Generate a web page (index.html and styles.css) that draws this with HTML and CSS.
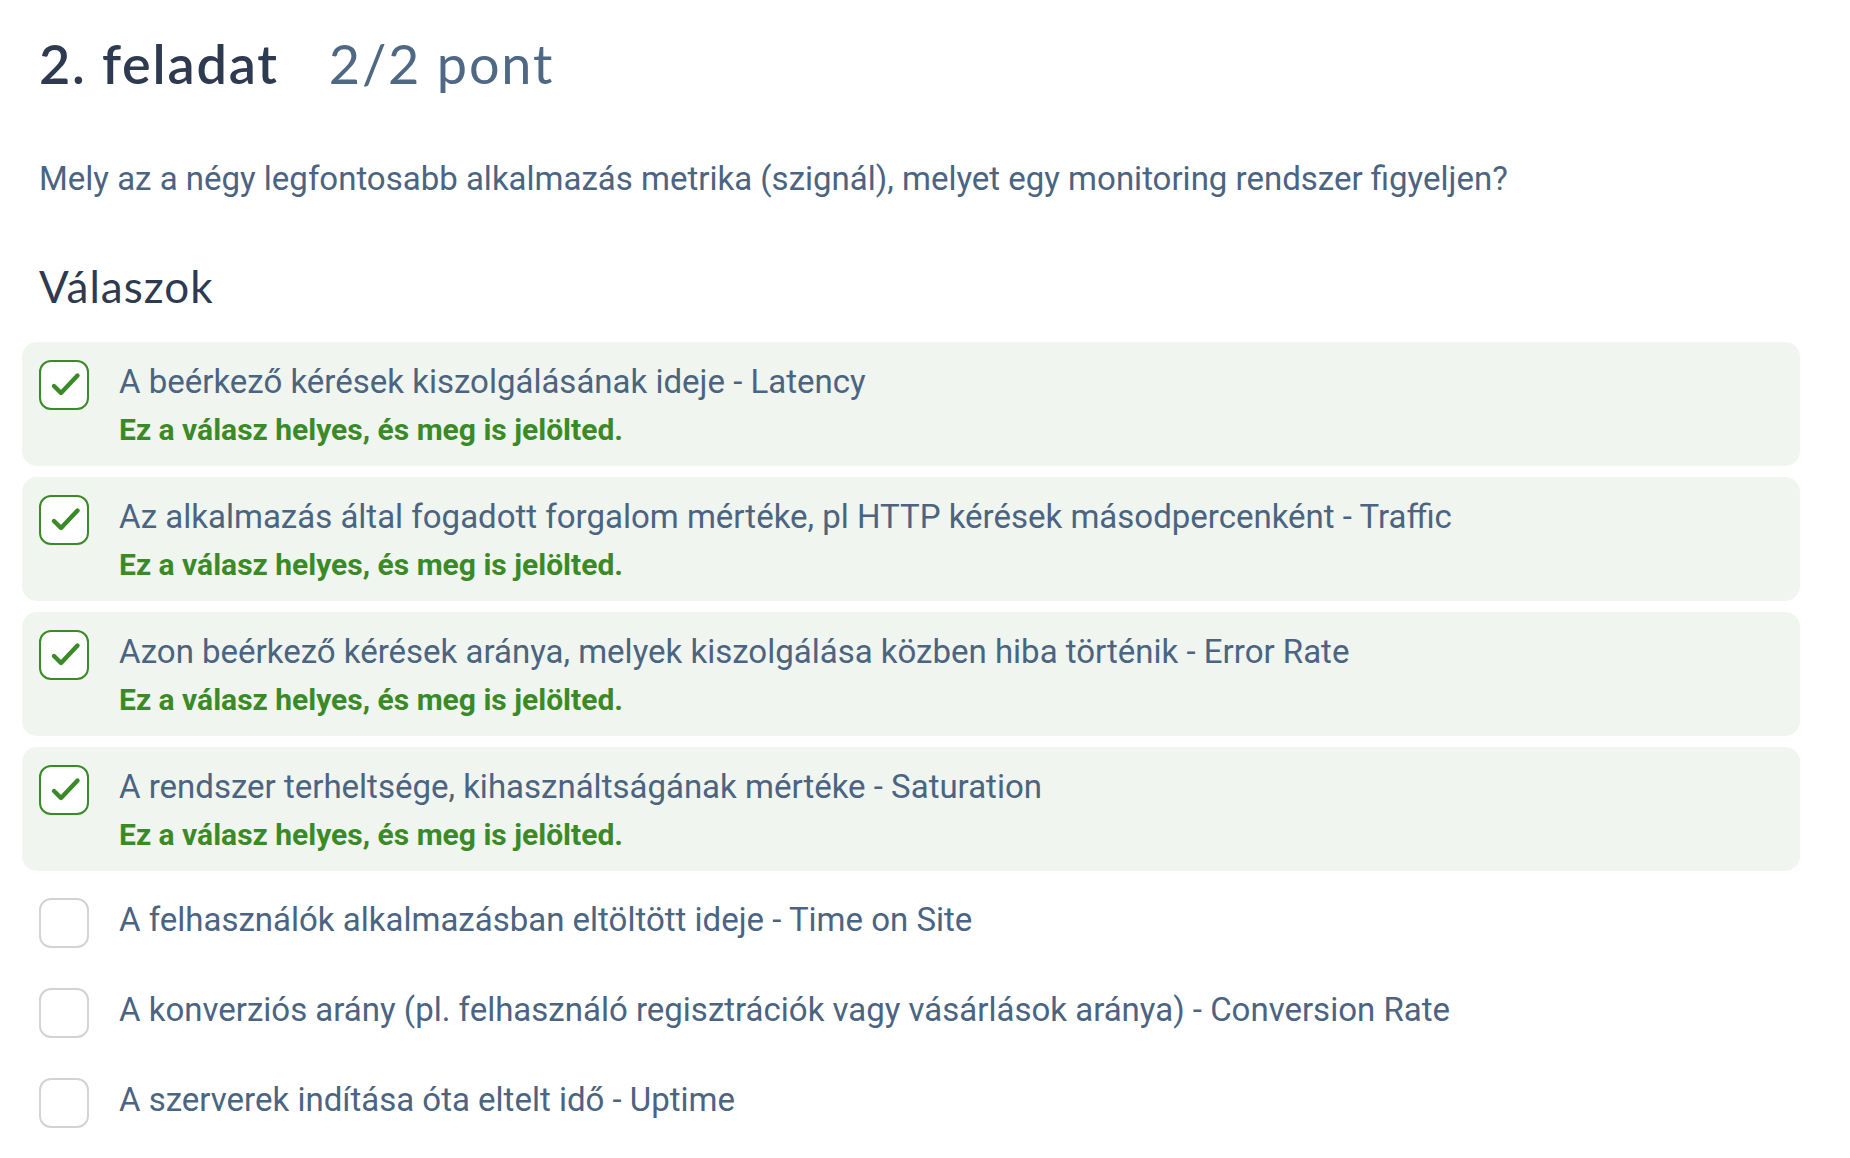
FILE: index.html
```html
<!DOCTYPE html>
<html lang="hu">
<head>
<meta charset="utf-8">
<title>2. feladat</title>
<link rel="stylesheet" href="styles.css">
</head>
<body>
<main class="task">
  <header class="task-head">
    <h1 class="task-title">2. feladat</h1>
    <span class="task-score">2/2 pont</span>
  </header>
  <p class="question">Mely az a négy legfontosabb alkalmazás metrika (szignál), melyet egy monitoring rendszer figyeljen?</p>
  <h2 class="answers-title">Válaszok</h2>
  <ul class="answers">
    <li class="answer answer--correct">
      <span class="check check--on"><svg viewBox="0 0 46 46" width="46" height="46"><path d="M13 24 L20 31 L36.5 13.5" fill="none" stroke="#3b8a28" stroke-width="4.4" stroke-linecap="round" stroke-linejoin="round"/></svg></span>
      <div class="answer-body">
        <div class="answer-text">A beérkező kérések kiszolgálásának ideje - Latency</div>
        <div class="answer-note">Ez a válasz helyes, és meg is jelölted.</div>
      </div>
    </li>
    <li class="answer answer--correct">
      <span class="check check--on"><svg viewBox="0 0 46 46" width="46" height="46"><path d="M13 24 L20 31 L36.5 13.5" fill="none" stroke="#3b8a28" stroke-width="4.4" stroke-linecap="round" stroke-linejoin="round"/></svg></span>
      <div class="answer-body">
        <div class="answer-text">Az alkalmazás által fogadott forgalom mértéke, pl HTTP kérések másodpercenként - Traffic</div>
        <div class="answer-note">Ez a válasz helyes, és meg is jelölted.</div>
      </div>
    </li>
    <li class="answer answer--correct">
      <span class="check check--on"><svg viewBox="0 0 46 46" width="46" height="46"><path d="M13 24 L20 31 L36.5 13.5" fill="none" stroke="#3b8a28" stroke-width="4.4" stroke-linecap="round" stroke-linejoin="round"/></svg></span>
      <div class="answer-body">
        <div class="answer-text">Azon beérkező kérések aránya, melyek kiszolgálása közben hiba történik - Error Rate</div>
        <div class="answer-note">Ez a válasz helyes, és meg is jelölted.</div>
      </div>
    </li>
    <li class="answer answer--correct">
      <span class="check check--on"><svg viewBox="0 0 46 46" width="46" height="46"><path d="M13 24 L20 31 L36.5 13.5" fill="none" stroke="#3b8a28" stroke-width="4.4" stroke-linecap="round" stroke-linejoin="round"/></svg></span>
      <div class="answer-body">
        <div class="answer-text">A rendszer terheltsége, kihasználtságának mértéke - Saturation</div>
        <div class="answer-note">Ez a válasz helyes, és meg is jelölted.</div>
      </div>
    </li>
    <li class="answer">
      <span class="check"></span>
      <div class="answer-body">
        <div class="answer-text">A felhasználók alkalmazásban eltöltött ideje - Time on Site</div>
      </div>
    </li>
    <li class="answer">
      <span class="check"></span>
      <div class="answer-body">
        <div class="answer-text">A konverziós arány (pl. felhasználó regisztrációk vagy vásárlások aránya) - Conversion Rate</div>
      </div>
    </li>
    <li class="answer">
      <span class="check"></span>
      <div class="answer-body">
        <div class="answer-text">A szerverek indítása óta eltelt idő - Uptime</div>
      </div>
    </li>
  </ul>
</main>
</body>
</html>
```

FILE: styles.css
```css
* { box-sizing: border-box; }

html, body {
  margin: 0;
  padding: 0;
  background: #ffffff;
}

body {
  font-family: Roboto, "Liberation Sans", sans-serif;
  color: #4b6481;
}

.task {
  padding: 34px 50px 0 22px;
}

.task-head {
  display: flex;
  align-items: baseline;
  gap: 50px;
  padding-left: 17px;
  margin: 0;
}

.task-title,
.task-score {
  font-family: Lato, "Noto Sans", sans-serif;
  font-size: 54px;
  line-height: 60px;
  font-weight: 600;
  letter-spacing: 1.8px;
  margin: 0;
}

.task-title { color: #2e3a4f; }

.task-score {
  color: #4f6985;
  font-weight: 400;
}

.question {
  margin: 65px 0 0 0;
  padding-left: 17px;
  font-size: 33px;
  line-height: 40px;
  color: #4b6481;
}

.answers-title {
  margin: 61px 0 0 0;
  padding-left: 17px;
  font-family: Lato, "Noto Sans", sans-serif;
  font-size: 44px;
  line-height: 52px;
  font-weight: 400;
  letter-spacing: 1px;
  color: #2e3a4f;
}

.answers {
  list-style: none;
  margin: 30px 0 0 0;
  padding: 0;
  display: flex;
  flex-direction: column;
  gap: 11px;
}

.answer {
  display: flex;
  align-items: flex-start;
  gap: 30px;
  padding: 16px 17px 13px;
  border-radius: 15px;
}

.answer--correct {
  background: #f0f5ef;
  padding-top: 18px;
  padding-bottom: 16px;
}

.check {
  flex: none;
  width: 50px;
  height: 50px;
  border: 2px solid #d2d4d4;
  border-radius: 12px;
  background: #ffffff;
  display: flex;
  align-items: center;
  justify-content: center;
}

.check--on {
  border-color: #3b8a28;
}

.answer-body {
  padding-top: 2px;
}

.answer-text {
  font-size: 33px;
  line-height: 40px;
  color: #4b6481;
}

.answer-note {
  margin-top: 8px;
  font-size: 30px;
  line-height: 40px;
  font-weight: 700;
  color: #3b8a28;
}
```
